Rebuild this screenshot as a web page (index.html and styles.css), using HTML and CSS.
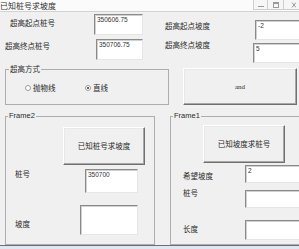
FILE: index.html
```html
<!DOCTYPE html>
<html>
<head>
<meta charset="utf-8">
<link rel="stylesheet" href="styles.css">
</head>
<body>
<div class="window">
  <div class="titlebar">
    <span class="title">已知桩号求坡度</span>
    <div class="caption-btns">
      <span class="cbtn min"><svg width="8" height="8" viewBox="0 0 8 8"><path d="M1 5.5h6" stroke="#9a9a9a" stroke-width="1"/></svg></span>
      <span class="cbtn max"><svg width="8" height="8" viewBox="0 0 8 8"><rect x="1.5" y="1.5" width="5" height="5" fill="none" stroke="#9a9a9a"/><path d="M1.5 2.5h5" stroke="#9a9a9a"/></svg></span>
      <span class="cbtn close"><svg width="8" height="8" viewBox="0 0 8 8"><path d="M4 1.5l4 5M8 1.5l-4 5" stroke="#9a9a9a"/></svg></span>
    </div>
  </div>

  <div class="top">
    <div class="col">
      <div class="field f1"><span class="lbl">超高起点桩号</span><div class="tb">350606.75</div></div>
      <div class="field f2"><span class="lbl">超高终点桩号</span><div class="tb">350706.75</div></div>
    </div>
    <div class="col">
      <div class="field f3"><span class="lbl">超高起点坡度</span><div class="tb">-2</div></div>
      <div class="field f4"><span class="lbl">超高终点坡度</span><div class="tb">5</div></div>
    </div>
  </div>

  <div class="mid">
    <fieldset class="fs group">
      <legend>超高方式</legend>
      <div class="radios">
        <span class="radio r-a"><span class="dot"></span>抛物线</span>
        <span class="radio"><span class="dot on"></span>直线</span>
      </div>
    </fieldset>
    <button class="btn and">and</button>
  </div>

  <div class="frames">
    <fieldset class="fs frame2">
      <legend class="latin">Frame2</legend>
      <button class="btn b2">已知桩号求坡度</button>
      <div class="field z2"><span class="lbl">桩号</span><div class="tb">350700</div></div>
      <div class="field p2"><span class="lbl">坡度</span><div class="tb"></div></div>
    </fieldset>
    <fieldset class="fs frame1">
      <legend class="latin">Frame1</legend>
      <button class="btn b1">已知坡度求桩号</button>
      <div class="field q1"><span class="lbl">希望坡度</span><div class="tb">2</div></div>
      <div class="field q2"><span class="lbl">桩号</span><div class="tb"></div></div>
      <div class="field q3"><span class="lbl">长度</span><div class="tb"></div></div>
    </fieldset>
  </div>
</div>
</body>
</html>
```

FILE: styles.css
```css
* { box-sizing: border-box; }
html, body { margin: 0; padding: 0; }
body {
  width: 299px;
  height: 249px;
  overflow: hidden;
  background: #dde8f4;
  font-family: "Noto Sans CJK SC", sans-serif;
  font-size: 7.5px;
  color: #2a2a2a;
}
.window {
  height: 246px;
  background: #f0f0f0;
  border-bottom: 1px solid #6e6e6e;
  overflow: hidden;
}
.titlebar {
  height: 12px;
  background: #fbfbfb;
  border-bottom: 1px solid #d2d2d2;
  display: flex;
  justify-content: space-between;
  align-items: flex-start;
}
.title { font-size: 8px; line-height: 11px; color: #333; white-space: nowrap; }
.caption-btns { display: flex; }
.cbtn {
  height: 10px;
  border: 1px solid #cfcfcf;
  border-top: none;
  border-right: none;
  background: #f6f6f6;
  display: flex;
  align-items: center;
  justify-content: center;
}
.cbtn.min { width: 14px; }
.cbtn.max { width: 16px; }
.cbtn.close { width: 16px; }

.top { display: grid; grid-template-columns: 150px 149px; height: 52px; }
.col { min-width: 0; }
.field { display: flex; align-items: flex-start; }
.lbl { line-height: 8px; white-space: nowrap; flex: none; }
.tb {
  flex: none;
  background: #fff;
  border: 1px solid;
  border-color: #8a8a8a #e6e6e6 #e6e6e6 #8a8a8a;
  box-shadow: inset 1px 1px #d0d0d0;
  font-family: "Liberation Sans", sans-serif;
  font-size: 6.5px;
  line-height: 7px;
  padding: 1px 2px;
  color: #333;
  white-space: nowrap;
}
.f1 { margin-top: 2px; padding-left: 10px; }
.f1 .lbl { width: 84px; margin-top: 5px; }
.f1 .tb { width: 49px; height: 21px; }
.f2 { margin-top: 4px; padding-left: 5px; }
.f2 .lbl { width: 91px; margin-top: 3px; }
.f2 .tb { width: 47px; height: 21px; }
.f3 { margin-top: 8px; padding-left: 15px; }
.f3 .lbl { width: 90px; margin-top: 2px; }
.f3 .tb { width: 46px; height: 20px; }
.f4 { margin-top: 3px; padding-left: 15px; }
.f4 .lbl { width: 88px; margin-top: -2px; }
.f4 .tb { width: 48px; height: 20px; }

.mid { display: flex; align-items: flex-start; height: 48px; }

.fs {
  margin: 0;
  padding: 0;
  border: 1px solid #aeaeae;
  min-inline-size: auto;
}
.fs legend { padding: 0 1px; font-size: 7.5px; line-height: 8px; margin-left: 3px; }
.fs legend.latin { font-family: "Liberation Sans", sans-serif; font-size: 7.5px; margin-left: 2px; }

.group { margin: 1px 0 0 5px; width: 164px; height: 40px; }
.radios { display: flex; margin-top: 11px; padding-left: 19px; }
.radio { display: flex; align-items: center; gap: 2px; line-height: 8px; white-space: nowrap; }
.r-a { width: 60px; }
.dot {
  width: 6px; height: 6px;
  border-radius: 50%;
  border: 1px solid #9a9a9a;
  background: #fff;
  flex: none;
}
.dot.on::after {
  content: "";
  display: block;
  width: 2px; height: 2px;
  margin: 1px;
  border-radius: 50%;
  background: #333;
}

.btn {
  display: block;
  flex: none;
  background: #f0f0f0;
  border: 1px solid;
  border-color: #ffffff #707070 #707070 #ffffff;
  box-shadow: inset -1px -1px #a8a8a8, inset 1px 1px #e8e8e8;
  font-family: "Noto Sans CJK SC", sans-serif;
  font-size: 7.5px;
  line-height: 8px;
  color: #2a2a2a;
  padding: 0;
}
.btn.and { margin: 4px 0 0 14px; width: 114px; height: 37px; font-family: "Liberation Serif", serif; font-size: 7px; }

.frames { display: flex; align-items: flex-start; }
.frame2 { margin-left: 5px; width: 150px; height: 133px; flex: none; }
.frame1 { margin-left: 15px; width: 140px; height: 133px; flex: none; }

.b2 { margin: 7px 0 0 57px; width: 82px; height: 38px; }
.z2 { margin-top: 4px; padding-left: 9px; }
.z2 .lbl { width: 70px; margin-top: 1px; }
.z2 .tb { width: 53px; height: 24px; }
.p2 { margin-top: 12px; padding-left: 9px; }
.p2 .lbl { width: 65px; margin-top: 15px; }
.p2 .tb { width: 58px; height: 30px; }

.b1 { margin: 5px 0 0 32px; width: 82px; height: 38px; }
.q1, .q2, .q3 { padding-left: 12px; }
.q1 .lbl, .q2 .lbl, .q3 .lbl { width: 62px; }
.q1 { margin-top: 2px; }
.q1 .lbl { margin-top: 7px; }
.q1 .tb { width: 56px; height: 18px; }
.q2 { margin-top: 7px; }
.q2 .lbl { margin-top: -1px; }
.q2 .tb { width: 56px; height: 18px; }
.q3 { margin-top: 12px; }
.q3 .lbl { margin-top: 5px; }
.q3 .tb { width: 56px; height: 20px; }
```
